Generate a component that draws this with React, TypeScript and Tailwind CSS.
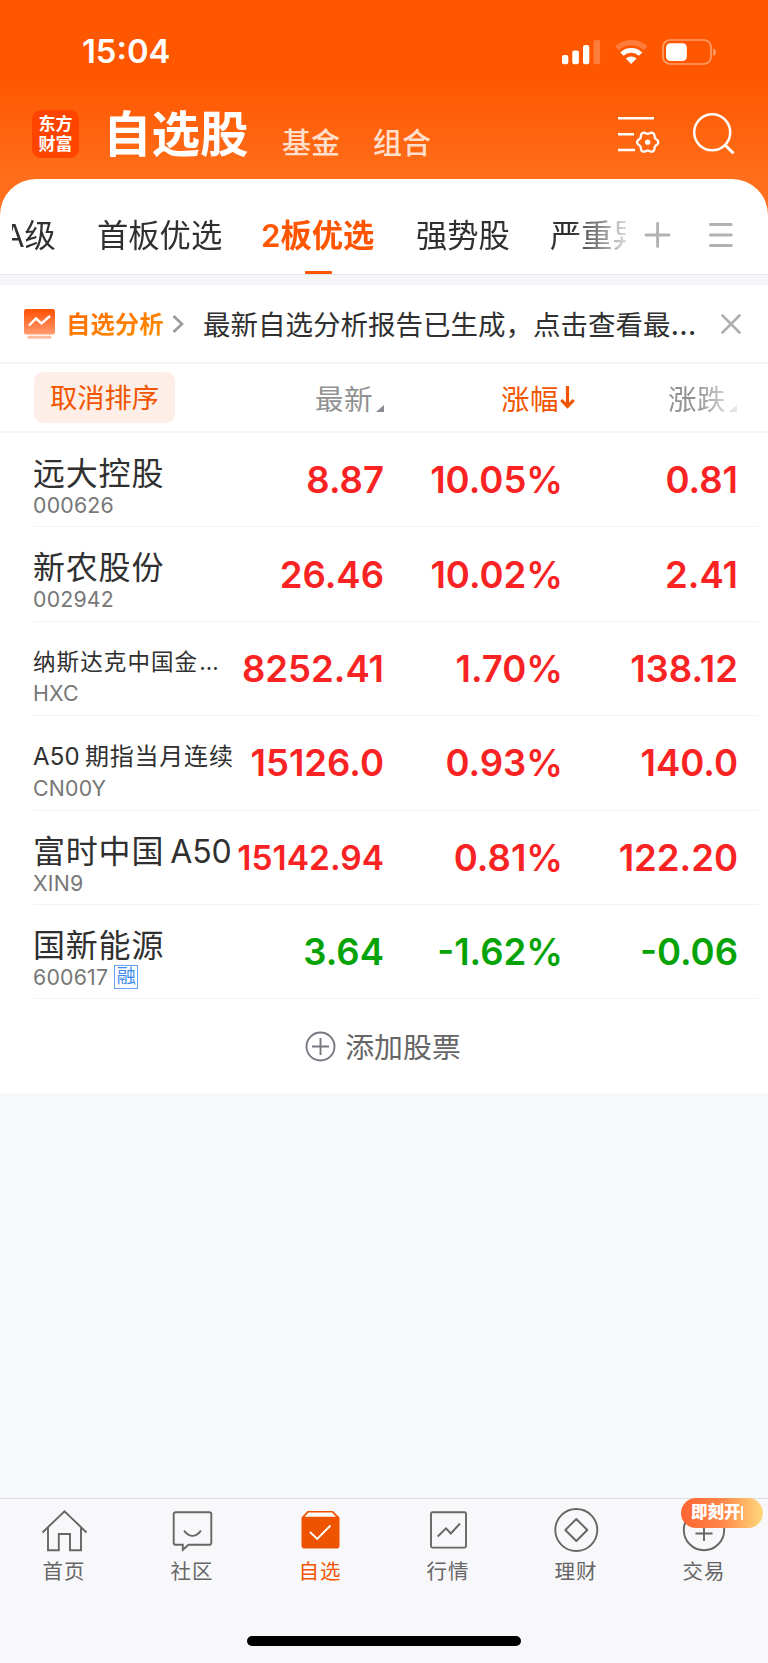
import React from "react";

type Stock = {
  name: React.ReactNode;
  nameClass: string;
  code: string;
  margin?: boolean;
  price: string;
  priceClass?: string;
  percent: string;
  change: string;
  down?: boolean;
};

const BIG = "text-[32px] tracking-[0.8px] mt-[2px] leading-[44px]";

const stocks: Stock[] = [
  { name: "远大控股", nameClass: BIG, code: "000626", price: "8.87", percent: "10.05%", change: "0.81" },
  { name: "新农股份", nameClass: BIG, code: "002942", price: "26.46", percent: "10.02%", change: "2.41" },
  {
    name: (
      <>
        纳斯达克中国金<span className="ml-[1px] tracking-[2px]">…</span>
      </>
    ),
    nameClass: "text-[22.5px] tracking-[1.1px] mt-[1px] leading-[44px]",
    code: "HXC",
    price: "8252.41",
    percent: "1.70%",
    change: "138.12",
  },
  {
    name: (
      <>
        <span className="tracking-[0.2px]">A50</span>
        <span className="ml-[5px]">期指当月连续</span>
      </>
    ),
    nameClass: "text-[24px] tracking-[0.8px] mt-[2px] leading-[44px]",
    code: "CN00Y",
    price: "15126.0",
    percent: "0.93%",
    change: "140.0",
  },
  {
    name: (
      <>
        富时中国<span className="ml-[6px] tracking-[-0.1px]">A50</span>
      </>
    ),
    nameClass: BIG,
    code: "XIN9",
    price: "15142.94",
    priceClass: "text-[33.5px]",
    percent: "0.81%",
    change: "122.20",
  },
  { name: "国新能源", nameClass: BIG, code: "600617", margin: true, price: "3.64", percent: "-1.62%", change: "-0.06", down: true },
];

function StatusIcons() {
  return (
    <svg className="mt-[1px]" width="156" height="26" viewBox="0 0 156 26" fill="#fff">
      <rect x="0" y="16" width="6.3" height="9.3" rx="2" />
      <rect x="10.3" y="11.5" width="6.6" height="13.8" rx="2" />
      <rect x="21" y="6" width="6.3" height="19.3" rx="2" />
      <rect x="31.5" y="1" width="6.6" height="24.3" rx="2" opacity=".23" />
      <path d="M53.2 7.400A23 23 0 0 1 85.200 7.400L81.600 11.200A18 18 0 0 0 56.800 11.200Z" opacity=".23" />
      <path d="M58.200 13.400A16 16 0 0 1 80.200 13.400L76.900 16.800A11.300 11.300 0 0 0 61.500 16.800Z" />
      <path d="M63.800 19.600A8 8 0 0 1 74.600 19.600L69.200 25Z" />
      <rect x="101" y="1" width="48" height="24" rx="7" fill="none" stroke="#fff" strokeWidth="1.7" opacity=".42" />
      <rect x="104" y="4.2" width="20.8" height="17.8" rx="4.3" />
      <path d="M151.3 9.3A4.2 4.2 0 0 1 151.3 17Z" opacity=".45" />
    </svg>
  );
}

// Outline of a soft six-lobed gear around (29.7, 30.2).
const gearPoints = Array.from({ length: 72 }, (_, i) => {
  const t = (i * Math.PI) / 36;
  const r = 9.5 + 1.1 * Math.cos(6 * t);
  return `${(29.7 + r * Math.cos(t)).toFixed(2)},${(30.2 + r * Math.sin(t)).toFixed(2)}`;
}).join(" ");

function FilterIcon() {
  return (
    <svg width="42" height="42" viewBox="0 0 42 42" fill="none" stroke="#fff" strokeWidth="2.4">
      <path d="M0 6.2H36M0 22.2H16M0 38H17" />
      <polygon points={gearPoints} strokeWidth="2.3" strokeLinejoin="round" />
      <circle cx="29.7" cy="30.2" r="2.6" fill="#fff" stroke="none" />
    </svg>
  );
}

function SearchIcon() {
  return (
    <svg width="42" height="42" viewBox="0 0 42 42" fill="none" stroke="#fff" strokeWidth="2.5">
      <circle cx="19.2" cy="20.3" r="18" />
      <path d="M31.5 32.500L40.500 41.300" strokeWidth="3" />
    </svg>
  );
}

const tabPaths: Record<string, React.ReactNode> = {
  首页: <path d="M2.5 24.5L24.5 3.2L46.5 24.5M8 19.5V42.2H18.8V26H30V42.2H41V19.5" />,
  社区: (
    <>
      <path d="M7.7 4.3H41.3Q43.3 4.3 43.3 6.3V34.5Q43.3 36.8 41.3 36.8H20.5L14.8 41.8V36.8H7.7Q5.7 36.8 5.7 34.8V6.3Q5.7 4.3 7.7 4.3Z" />
      <path d="M16 22.6Q24.5 33.2 33 22.6" />
    </>
  ),
  自选: (
    <>
      <path d="M11.5 3H37L43.5 9.6V37.5Q43.5 40.6 40.5 40.6H8.500Q5.500 40.6 5.500 37.500V9.600Z" fill="#ee5300" stroke="none" />
      <path d="M12.500 4.600H36L40 8.700H8.600Z" fill="#fff" stroke="none" />
      <path d="M14 24L21.200 31L34.500 17.500" stroke="#fff" />
    </>
  ),
  行情: (
    <>
      <rect x="7" y="4.300" width="35" height="35.300" rx="1.500" />
      <path d="M13.700 28.500L22 20.300L26.800 25.500L36 15.500" />
    </>
  ),
  理财: (
    <>
      <circle cx="24.300" cy="22" r="21" />
      <path d="M24.300 11L35.300 22L24.300 33L13.300 22Z" strokeLinejoin="round" />
    </>
  ),
  交易: (
    <>
      <circle cx="24" cy="22" r="20.200" />
      <path d="M15.500 25.500H32.500M24 12V33" />
    </>
  ),
};

function TabItem({ label, active, badge }: { label: string; active?: boolean; badge?: string }) {
  return (
    <div className={`relative flex w-32 flex-col items-center pt-[9px] ${active ? "text-[#f25500]" : "text-[#666]"}`}>
      <svg className="mr-[1px]" width="48" height="46" viewBox="0 0 48 46" fill="none" stroke="currentColor" strokeWidth="1.9">
        {tabPaths[label]}
      </svg>
      <span className="mt-[3px] text-[20.5px] leading-[30px] tracking-[1px]">{label}</span>
      {badge && (
        <span className="absolute -top-px left-[41px] flex h-[30px] w-[82px] items-center overflow-hidden rounded-[15px] bg-linear-to-r from-[#ff6433] via-[#ff8548] to-[#ffd97c] pb-px pl-[10px] text-[16.5px] font-black whitespace-nowrap text-white">
          {badge}
          <i className="h-[14px] w-[2px] bg-white" />
        </span>
      )}
    </div>
  );
}

function Corner({ className }: { className: string }) {
  return (
    <svg className={className} width="8" height="7" viewBox="0 0 8 7">
      <path d="M8 0V7H0Z" fill="#888b92" />
    </svg>
  );
}

export default function App() {
  return (
    <div className="flex h-[1663px] w-[768px] flex-col overflow-hidden bg-[#f7f8fa] font-['Inter','Noto_Sans_CJK_SC',sans-serif] text-[#303030]">
      <div className="bg-[linear-gradient(180deg,#ff5700_0px,#ff5700_80px,#ff6f1b_180px,#ff6f1b_220px)]">
        <div className="flex h-[102px] items-center justify-between pr-[50px] pl-[82px]">
          <span className="mt-[2px] text-[32.8px] font-semibold text-white">15:04</span>
          <StatusIcons />
        </div>
        <header className="flex h-[77px] items-start pl-[32px] text-white">
          <div className="mt-[8px] flex h-[48px] w-[47px] flex-col items-center justify-center rounded-[9px] bg-[#ff4400] text-[17px] leading-[20px] font-bold">
            <span>东方</span>
            <span>财富</span>
          </div>
          <h1 className="mt-[1px] ml-[24px] w-[151px] text-[48.5px] leading-[64px] font-bold">自选股</h1>
          <span className="mt-[22px] ml-[28px] w-[91px] text-[29px] leading-[40px] font-medium text-[#ffdfcc]">基金</span>
          <span className="mt-[22px] text-[29px] leading-[40px] font-medium text-[#ffdfcc]">组合</span>
          <div className="mt-[10px] ml-auto flex gap-[33px] pr-[33px]">
            <FilterIcon />
            <SearchIcon />
          </div>
        </header>
        <nav className="flex h-[96px] rounded-t-[36px] border-b border-[#e6e6e9] bg-white">
          <div className="ml-[12px] flex w-[614px] overflow-hidden mask-[linear-gradient(90deg,#000_560px,transparent_625px)] text-[31.3px] leading-[114px] whitespace-nowrap">
            <span className="-ml-[9px] w-[94px] shrink-0">A级</span>
            <span className="w-[164px] shrink-0">首板优选</span>
            <span className="flex w-[155px] shrink-0 flex-col font-semibold text-[#ff5500]">
              <span className="h-[92px]">2板优选</span>
              <i className="ml-[44px] h-[4px] w-[27px] rounded-[1px] bg-[#ff5500]" />
            </span>
            <span className="w-[134px] shrink-0">强势股</span>
            <span className="shrink-0">严重异动</span>
          </div>
          <svg className="mt-[42px] ml-[18px]" width="92" height="28" viewBox="0 0 92 28" stroke="#b2b2b2" strokeWidth="2.9" strokeLinecap="round">
            <path d="M2 14H25M13.600 2.500V25.500M66.300 3.500H87.300M66.300 14H87.300M66.300 24.500H87.300" />
          </svg>
        </nav>
      </div>

      <div className="h-[10px] bg-[#f5f6fa]" />

      <section className="flex h-[79px] items-center border-b-2 border-[#f5f5f7] bg-white pt-px pl-[23px]">
        <svg width="32" height="32" viewBox="0 0 32 32">
          <defs>
            <linearGradient id="chart" x1="0" y1="0" x2="0" y2="1">
              <stop offset="0" stopColor="#ff5000" />
              <stop offset="1" stopColor="#ff9b70" />
            </linearGradient>
          </defs>
          <rect x="1" y="1" width="31" height="25.500" rx="2.500" fill="url(#chart)" />
          <rect x="4.500" y="27.800" width="24" height="3" rx="1.500" fill="#ffbc9e" />
          <path d="M6 17.500L13 10.500L18.500 15.500L27 8" fill="none" stroke="#fff" strokeWidth="2.400" />
        </svg>
        <span className="ml-[11px] w-[98px] bg-linear-to-br from-[#ff6600] to-[#ff9200] bg-clip-text text-[24.400px] leading-[36px] font-bold whitespace-nowrap text-transparent">
          自选分析
        </span>
        <svg className="ml-[8px]" width="12" height="20" viewBox="0 0 12 20" fill="none" stroke="#999" strokeWidth="2.500">
          <path d="M1.500 2L10 10L1.500 18" />
        </svg>
        <span className="ml-[19px] w-[500px] pt-px text-[27.500px] leading-[40px] whitespace-nowrap">
          最新自选分析报告已生成，点击查看最<span className="text-[30px]">…</span>
        </span>
        <svg className="ml-[18px]" width="20" height="20" viewBox="0 0 20 20" stroke="#b0b0b0" strokeWidth="2.700" strokeLinecap="round">
          <path d="M1.500 1.500L18.500 18.500M18.500 1.500L1.500 18.500" />
        </svg>
      </section>

      <section className="bg-white">
        <div className="flex h-[69px] items-center border-b-2 border-[#f6f6f8] pl-[34px] text-[28.500px] text-[#929292]">
          <button className="h-[51px] w-[141px] rounded-[9px] bg-[#fdeee7] pt-[3px] text-[27.300px] text-[#f05500]">取消排序</button>
          <span className="mt-[4px] ml-[140px] w-[58px] leading-[40px] tracking-[0.500px]">最新</span>
          <Corner className="mt-[21px] ml-[3px]" />
          <span className="mt-[4px] ml-[117px] w-[58px] leading-[40px] tracking-[0.500px] text-[#f25500]">涨幅</span>
          <svg className="ml-px" width="15" height="23" viewBox="0 0 15 23" fill="none" stroke="#f25500" strokeWidth="3.200">
            <path d="M7.500 0V20.500M1.300 14L7.500 20.500L13.700 14" />
          </svg>
          <div className="ml-[93px] flex items-center mask-[linear-gradient(90deg,#000_28px,transparent_78px)]">
            <span className="mt-[4px] w-[58px] leading-[40px] tracking-[0.500px]">涨跌</span>
            <Corner className="mt-[21px] ml-[3px]" />
          </div>
        </div>

        {stocks.map((s) => (
          <div key={s.code} className="ml-[33px] flex h-[94.400px] w-[725px] border-b border-[#f3f3f5]">
            <div className="mt-[17px] flex w-[200px] flex-col whitespace-nowrap">
              <div className={s.nameClass}>{s.name}</div>
              <div className="-mt-[5px] flex items-center text-[21.300px] leading-[28px] tracking-[0.200px] text-[#777]">
                {s.code}
                {s.margin && (
                  <span className="ml-[6px] flex size-[24px] items-center justify-center border border-[#64a3f3] text-[19px] leading-none tracking-normal text-[#3d89ee]">
                    融
                  </span>
                )}
              </div>
            </div>
            <div className={`flex h-[95px] grow items-center text-[36.500px] font-semibold ${s.down ? "text-[#05a305]" : "text-[#f92323]"}`}>
              <span className={`w-[151px] text-right ${s.priceClass ?? ""}`}>{s.price}</span>
              <span className="w-[179px] text-right">{s.percent}</span>
              <span className="w-[175px] text-right">{s.change}</span>
            </div>
          </div>
        ))}

        <div className="flex h-[94px] items-center justify-center pr-[2px] text-[28.900px] text-[#666]">
          <svg className="mr-[9px]" width="31" height="31" viewBox="0 0 31 31" fill="none" stroke="#777980" strokeWidth="1.900">
            <circle cx="15.500" cy="15.500" r="14" />
            <path d="M7 15.500H24M15.500 7V24" />
          </svg>
          <span className="mt-[2px]">添加股票</span>
        </div>
      </section>

      <footer className="mt-auto flex h-[165px] flex-col items-center border-t border-[#dfe0e3] bg-[#f8f8fb]">
        <div className="flex h-[137px] w-full">
          <TabItem label="首页" />
          <TabItem label="社区" />
          <TabItem label="自选" active />
          <TabItem label="行情" />
          <TabItem label="理财" />
          <TabItem label="交易" badge="即刻开" />
        </div>
        <div className="h-[10px] w-[274px] rounded-full bg-black" />
      </footer>
    </div>
  );
}
